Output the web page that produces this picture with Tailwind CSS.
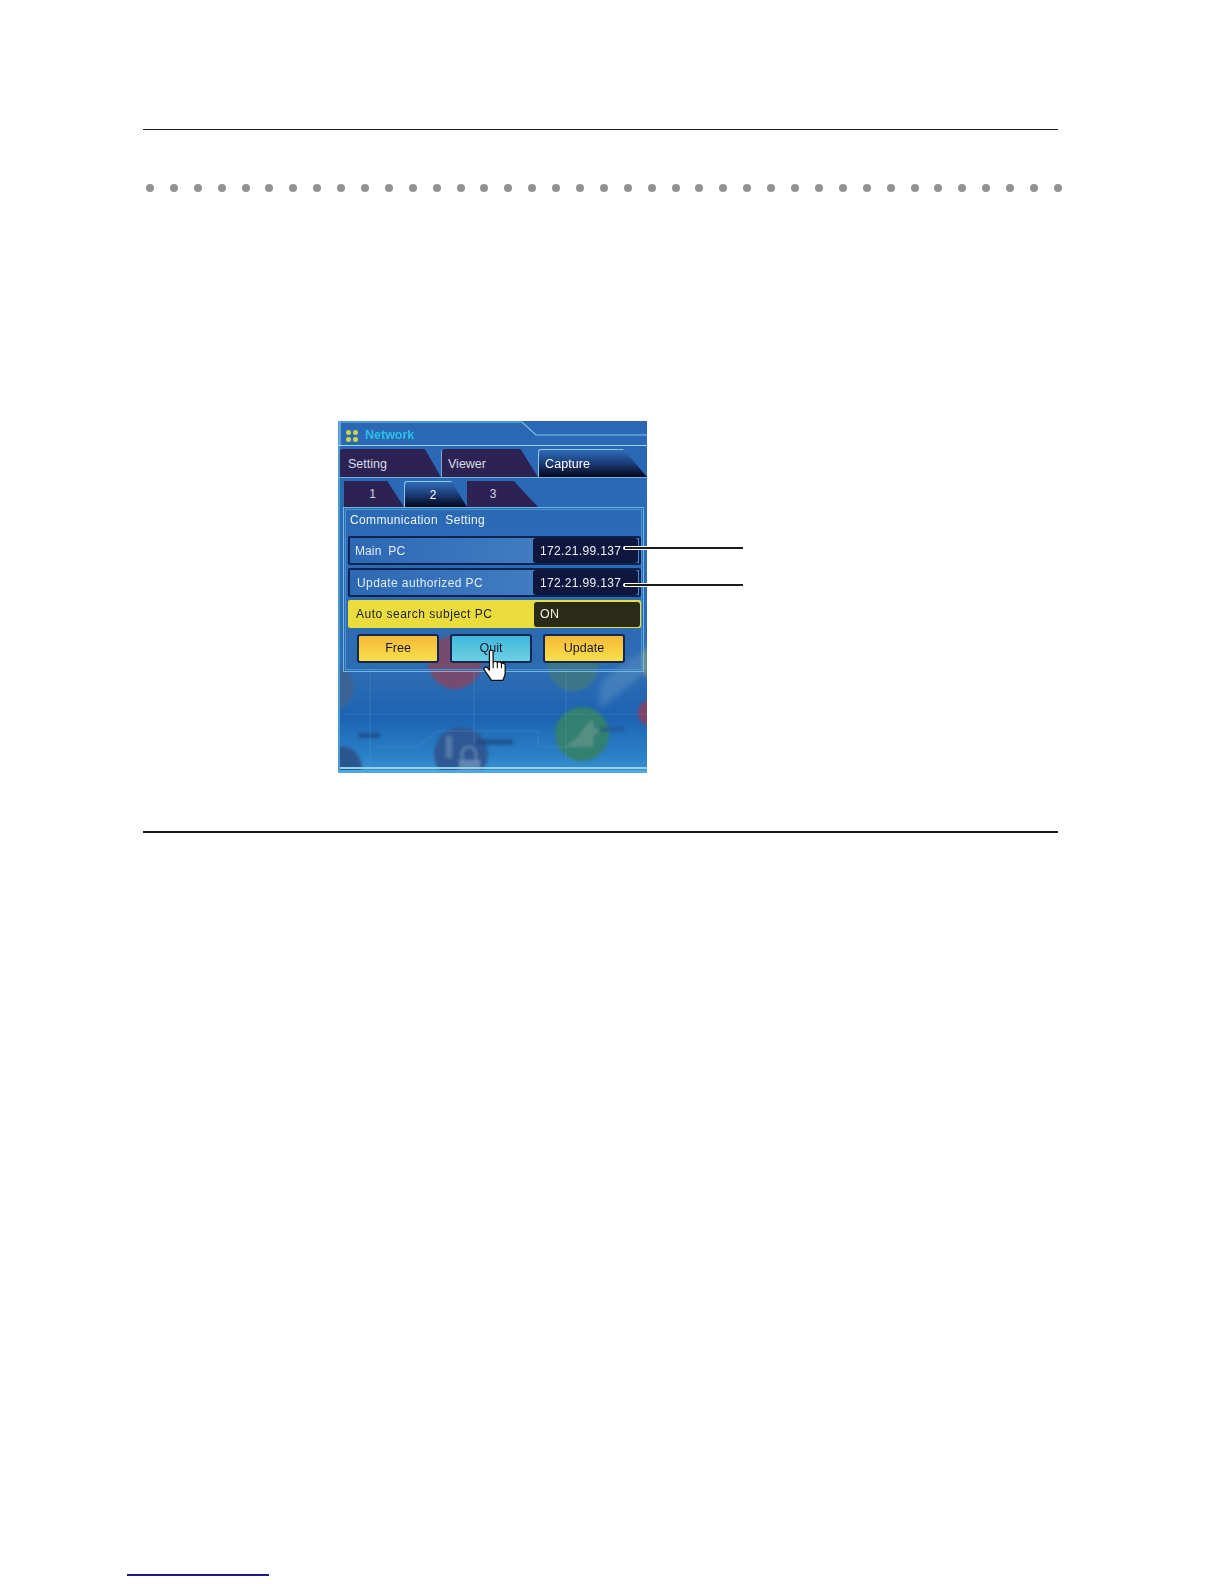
<!DOCTYPE html>
<html>
<head>
<meta charset="utf-8">
<script src="https://cdn.jsdelivr.net/npm/@tailwindcss/browser@4"></script>
</head>
<body class="bg-white font-['Liberation_Sans',Arial,sans-serif]">
<div class="relative h-[1584px] w-[1224px] overflow-hidden">
  <div class="pt-[129px] pl-[143px]">
    <div class="h-px w-[915px] bg-[#1c1c1c]"></div>
    <div class="mt-[54px] flex w-[919px] justify-between pl-[3px]">
      <span class="size-2 rounded-full bg-[#929292]"></span><span class="size-2 rounded-full bg-[#929292]"></span><span class="size-2 rounded-full bg-[#929292]"></span><span class="size-2 rounded-full bg-[#929292]"></span><span class="size-2 rounded-full bg-[#929292]"></span><span class="size-2 rounded-full bg-[#929292]"></span><span class="size-2 rounded-full bg-[#929292]"></span><span class="size-2 rounded-full bg-[#929292]"></span><span class="size-2 rounded-full bg-[#929292]"></span><span class="size-2 rounded-full bg-[#929292]"></span><span class="size-2 rounded-full bg-[#929292]"></span><span class="size-2 rounded-full bg-[#929292]"></span><span class="size-2 rounded-full bg-[#929292]"></span><span class="size-2 rounded-full bg-[#929292]"></span><span class="size-2 rounded-full bg-[#929292]"></span><span class="size-2 rounded-full bg-[#929292]"></span><span class="size-2 rounded-full bg-[#929292]"></span><span class="size-2 rounded-full bg-[#929292]"></span><span class="size-2 rounded-full bg-[#929292]"></span><span class="size-2 rounded-full bg-[#929292]"></span><span class="size-2 rounded-full bg-[#929292]"></span><span class="size-2 rounded-full bg-[#929292]"></span><span class="size-2 rounded-full bg-[#929292]"></span><span class="size-2 rounded-full bg-[#929292]"></span><span class="size-2 rounded-full bg-[#929292]"></span><span class="size-2 rounded-full bg-[#929292]"></span><span class="size-2 rounded-full bg-[#929292]"></span><span class="size-2 rounded-full bg-[#929292]"></span><span class="size-2 rounded-full bg-[#929292]"></span><span class="size-2 rounded-full bg-[#929292]"></span><span class="size-2 rounded-full bg-[#929292]"></span><span class="size-2 rounded-full bg-[#929292]"></span><span class="size-2 rounded-full bg-[#929292]"></span><span class="size-2 rounded-full bg-[#929292]"></span><span class="size-2 rounded-full bg-[#929292]"></span><span class="size-2 rounded-full bg-[#929292]"></span><span class="size-2 rounded-full bg-[#929292]"></span><span class="size-2 rounded-full bg-[#929292]"></span><span class="size-2 rounded-full bg-[#929292]"></span>
    </div>

    <!-- panel -->
    <div class="relative mt-[229px] ml-[195px] h-[352px] w-[309px] overflow-hidden bg-[#2a68b6] text-white">
      <!-- background art -->
      <svg class="absolute inset-0" width="309" height="352" viewBox="0 0 309 352">
        <defs>
          <linearGradient id="bg" x1="0" y1="0" x2="0" y2="1">
            <stop offset="0" stop-color="#2a68b6"/><stop offset="0.72" stop-color="#2c6cb2"/><stop offset="0.84" stop-color="#1d63b2"/><stop offset="0.95" stop-color="#2a80c6"/><stop offset="1" stop-color="#3b93d0"/>
          </linearGradient>
          <filter id="soft"><feGaussianBlur stdDeviation="1.6"/></filter>
          <filter id="softer"><feGaussianBlur stdDeviation="3"/></filter>
        </defs>
        <rect width="309" height="352" fill="url(#bg)"/>
        <path d="M262 288 L309 250 L309 235 L300 232 L262 262 Z" fill="#6a9cc8" opacity="0.4" filter="url(#softer)"/>
        <g filter="url(#soft)">
          <circle cx="117" cy="241" r="27" fill="#764c70"/>
          <circle cx="235" cy="245" r="25" fill="#3d7488"/>
          <circle cx="-8" cy="266" r="24" fill="#3a6496"/>
          <circle cx="313" cy="292" r="13" fill="#7e4468"/>
          <path d="M304 232 L309 224 L309 258 L305 250 Z" fill="#a2a85e" opacity="0.6"/>
          <circle cx="244" cy="313" r="27" fill="#33806f"/>
          <path d="M228 325 L240 316 L246 307 L254 298 L256 307 L262 309 L255 316 L255 326 Z" fill="#568f84"/>
          <rect x="262" y="306" width="24" height="5" fill="#1f4f88" opacity="0.55"/>
          <circle cx="123" cy="333" r="27" fill="#2f5894"/>
          <rect x="139" y="318" width="36" height="6" fill="#1c4a82" opacity="0.7"/>
          <rect x="108" y="315" width="6" height="22" fill="#6d90bb" opacity="0.6"/>
          <path d="M121 349 V339 H142 V349 Z" fill="#6286b4"/>
          <path d="M124 339 V333 A7 7 0 0 1 138 333 V339" fill="none" stroke="#6286b4" stroke-width="2"/>
          <circle cx="2" cy="347" r="22" fill="#2a5690"/>
          <rect x="20" y="312" width="22" height="5" fill="#1c4a82" opacity="0.7"/>
        </g>
        <g fill="none" stroke="#63a0d2" stroke-opacity="0.3">
          <path d="M32 248 V352"/><path d="M136 248 V322"/><path d="M228 248 V340"/>
          <path d="M0 293 H309" stroke-opacity="0.2"/>
          <path d="M35 326 H78 L100 310 H200 V326 H240"/>
        </g>
        <rect x="2" y="346" width="307" height="2" fill="#8fd4ee"/>
        <rect x="0" y="0" width="2" height="352" fill="#4c9ad0"/>
        <rect x="0" y="349" width="309" height="3" fill="#52a8d8"/>
      </svg>

      <div class="relative flex flex-col blur-[0.4px]">
        <!-- title bar -->
        <div class="relative h-[25px]">
          <svg class="absolute inset-0" width="309" height="25" viewBox="0 0 309 25">
            <path d="M2 24 V1 H184 L198 14 H309" fill="none" stroke="#7fc4e8" stroke-width="1.2"/>
            <path d="M0 24.5 H309" stroke="#9ad4ee" stroke-width="1"/>
          </svg>
          <div class="relative flex h-[24px] items-center pt-[5px] pl-[8px]">
            <span class="grid size-[12px] grid-cols-2 gap-[2px]">
              <span class="size-[5px] rounded-full bg-[#c8d84a]"></span><span class="size-[5px] rounded-full bg-[#c8d84a]"></span><span class="size-[5px] rounded-full bg-[#c8d84a]"></span><span class="size-[5px] rounded-full bg-[#c8d84a]"></span>
            </span>
            <span class="ml-[7px] text-[12.5px] font-bold text-[#2cc0e8]">Network</span>
          </div>
        </div>
        <!-- main tabs -->
        <div class="relative mt-[3px] ml-[2px] flex h-[28px]">
          <div class="flex h-[28px] w-[101px] items-center rounded-tl-[3px] bg-[#2c2354] pt-[2px] pl-[8px] text-[12.5px] text-[#d8dde8] [clip-path:polygon(0_0,84%_0,100%_100%,0_100%)]">Setting</div>
          <div class="flex h-[28px] w-[97px] items-center rounded-tl-[3px] border-l border-[#7fa8d0] bg-[#2c2354] pt-[2px] pl-[6px] text-[12.5px] text-[#d8dde8] [clip-path:polygon(0_0,82%_0,100%_100%,0_100%)]">Viewer</div>
          <div class="flex h-[28px] w-[109px] items-center rounded-tl-[3px] border-t border-l border-[#8fc4e4] bg-gradient-to-b from-[#2f6cb8] via-[#1c3c78] to-[#05081c] pt-[2px] pl-[6px] text-[12.5px] tracking-[0.1px] text-white [clip-path:polygon(0_0,78%_0,100%_100%,0_100%)]">Capture</div>
        </div>
        <div class="h-px bg-[#6fb4e0]"></div>
        <!-- sub tabs -->
        <div class="mt-[3px] ml-[6px] flex h-[26px]">
          <div class="flex h-[26px] w-[60px] items-center justify-center bg-[#2c2354] pr-[3px] text-[12px] text-[#d0d4e0] [clip-path:polygon(0_0,72%_0,100%_100%,0_100%)]">1</div>
          <div class="flex h-[26px] w-[63px] items-center justify-center rounded-tl-[3px] border-t border-l border-[#8fc4e4] bg-gradient-to-b from-[#2f6cb8] via-[#1c3c78] to-[#05081c] pr-[6px] text-[12px] text-white [clip-path:polygon(0_0,75%_0,100%_100%,0_100%)]">2</div>
          <div class="flex h-[26px] w-[71px] items-center justify-center bg-[#2c2354] pr-[19px] text-[12px] text-[#d0d4e0] [clip-path:polygon(0_0,66%_0,100%_100%,0_100%)]">3</div>
        </div>
        <!-- group box -->
        <div class="mr-[3px] ml-[5px] h-[165px] border border-[#6fb8e4] p-px">
          <div class="flex h-full flex-col border border-[#4c94d0] pl-[2px]">
            <div class="flex h-[26px] shrink-0 items-center pb-[6px] pl-[2px] text-[12px] tracking-[0.35px] text-[#f0f4fa]">Communication&nbsp;&nbsp;Setting</div>
            <!-- rows -->
            <div class="flex h-[29px] shrink-0 items-center rounded-[2px] border-2 border-[#0f2350] bg-gradient-to-r from-[#2d68b4] to-[#4d86c8]">
              <span class="flex-1 pl-[5px] text-[12px] tracking-[0.1px] text-[#e4ecf6]">Main&nbsp;&nbsp;PC</span>
              <span class="mr-px flex h-[25px] w-[105px] items-center rounded-[3px] bg-[#10173f] pl-[7px] text-[12px] tracking-[0.35px] text-[#f0f0f4]">172.21.99.137</span>
            </div>
            <div class="mt-[3px] flex h-[29px] shrink-0 items-center rounded-[2px] border-2 border-[#0f2350] bg-gradient-to-r from-[#2d68b4] to-[#4d86c8]">
              <span class="flex-1 pl-[7px] text-[12px] tracking-[0.4px] text-[#e4ecf6]">Update&nbsp;authorized&nbsp;PC</span>
              <span class="mr-px flex h-[25px] w-[105px] items-center rounded-[3px] bg-[#10173f] pl-[7px] text-[12px] tracking-[0.35px] text-[#f0f0f4]">172.21.99.137</span>
            </div>
            <div class="mt-[3px] flex h-[28px] shrink-0 items-center rounded-[2px] bg-[#eadc3c]">
              <span class="flex-1 pl-[8px] text-[12px] tracking-[0.5px] text-[#1c2030]">Auto&nbsp;search&nbsp;subject&nbsp;PC</span>
              <span class="mr-px flex h-[25px] w-[106px] items-center rounded-[3px] bg-[#2a2a18] pl-[6px] text-[12.5px] tracking-[0.4px] text-[#f0f0e0]">ON</span>
            </div>
            <!-- buttons -->
            <div class="mt-[6px] flex pl-[9px]">
              <div class="flex h-[29px] w-[82px] items-center justify-center rounded-[3px] border-2 border-[#16264e] bg-gradient-to-b from-[#f5b93a] to-[#f8e04a] text-[12.5px] text-[#14182c]">Free</div>
              <div class="ml-[11px] flex h-[29px] w-[82px] items-center justify-center rounded-[3px] border-2 border-[#16264e] bg-gradient-to-b from-[#3fb8dc] to-[#6cd0e4] text-[12.5px] text-[#14182c]">Quit</div>
              <div class="ml-[11px] flex h-[29px] w-[82px] items-center justify-center rounded-[3px] border-2 border-[#16264e] bg-gradient-to-b from-[#f5b93a] to-[#f8e04a] text-[12.5px] text-[#14182c]">Update</div>
            </div>
          </div>
        </div>
      </div>

      <!-- hand cursor -->
      <svg class="absolute top-[227px] left-[144px]" width="26" height="35" viewBox="0 0 28 36">
        <path d="M8 3 C8 1 12 1 12 3 V15 C13 13 16 13 16.500 15 C17.500 13.500 20.500 13.500 21 16 C22 15 25 15.500 25 18 V26 C25 29 23.500 31 22.500 34 H10 C9 31 6 28 2.500 23 C1 20.500 4 18.500 6 20.500 L8 23 Z" fill="#fff" stroke="#111" stroke-width="1.4" stroke-linejoin="round"/>
        <path d="M12 15 V21 M16.500 15 V21 M21 16 V21" stroke="#111" stroke-width="1.2" fill="none"/>
      </svg>
    </div>

    <div class="mt-[58px] h-[2px] w-[915px] bg-[#1c1c1c]"></div>
  </div>

  <!-- callout leaders over the panel -->
  <div class="absolute top-[546px] left-[623px] h-[4px] w-[121px] rounded-l-full bg-white"></div>
  <div class="absolute top-[547px] left-[625px] h-[2px] w-[118px] bg-[#1c1c1c]"></div>
  <div class="absolute top-[583px] left-[623px] h-[4px] w-[121px] rounded-l-full bg-white"></div>
  <div class="absolute top-[584px] left-[625px] h-[2px] w-[118px] bg-[#1c1c1c]"></div>

  <!-- footer link underline -->
  <div class="absolute top-[1574px] left-[127px] h-[2px] w-[142px] bg-[#1a1a8c]"></div>
</div>
</body>
</html>
